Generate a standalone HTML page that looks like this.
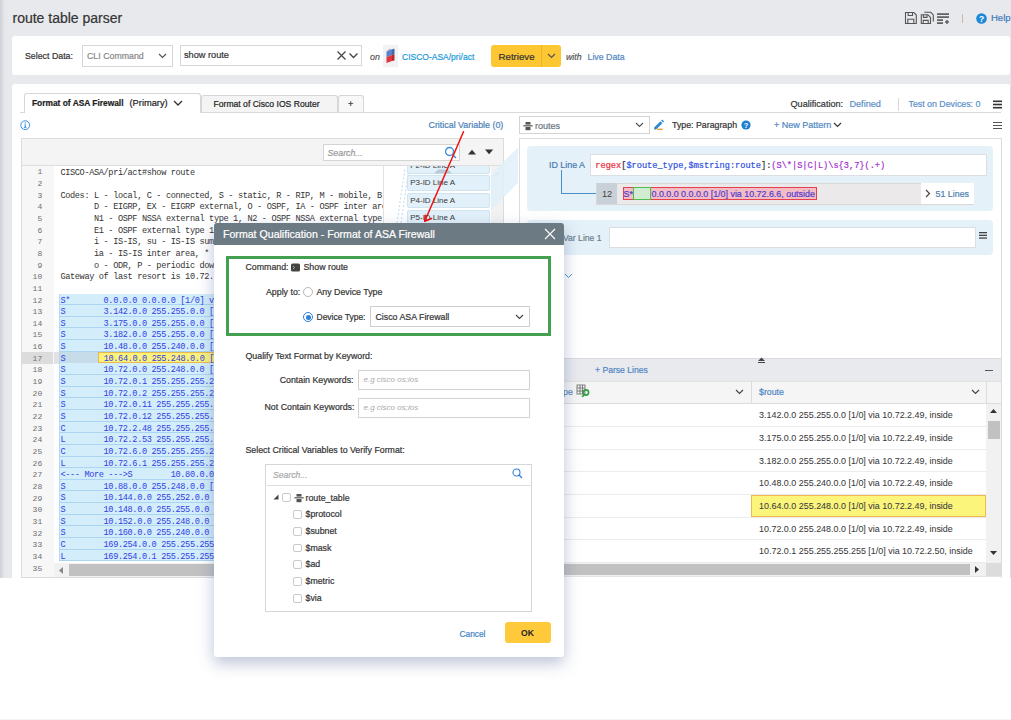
<!DOCTYPE html>
<html><head><meta charset="utf-8">
<style>
*{box-sizing:border-box;margin:0;padding:0}
html,body{width:1011px;height:720px;overflow:hidden;background:#fff;font-family:"Liberation Sans",sans-serif;color:#333}
.a{position:absolute}
.t{position:absolute;white-space:pre;line-height:14px;font-size:8.8px;-webkit-text-stroke:0.2px currentColor}
.blue{color:#3b7cbf}
#app{position:absolute;left:0;top:0;width:1011px;height:578px;background:#e8e9ec;overflow:hidden}
.card{position:absolute;background:#fff;border-radius:3px}
.box{position:absolute;border:1px solid #d6d6d6;background:#fff}
.mono{font-family:"Liberation Mono",monospace}
.cb{width:8.5px;height:8.5px;border:1px solid #cacaca;border-radius:2px;background:#fff}
.pbox{left:384.7px;width:83px;height:15.5px;background:#e1f0f9;border:1px solid #cfe3f0;border-radius:2px}
.pbox span{position:absolute;left:2.5px;top:0;line-height:14px;font-size:8px;color:#3a3a3a;white-space:pre}
#code div{height:11.65px;overflow:visible;line-height:14.6px}

#code .hl{background:#d3edfb;border-bottom:1px solid #aad4f0;border-left:1px solid #b4daf2;color:#2f3fe6;margin-left:-1px;padding-left:0}
#code .l17{position:relative}
#code .s17{position:absolute;left:0;top:0;width:38px;height:11px;background:#c6dde9;line-height:14.6px}
#code .y17{position:absolute;left:38px;top:0;width:300px;height:11.5px;background:#fcf27a;border:1px solid #e8b850;padding-left:4.3px;line-height:12.6px}
</style></head><body>
<div id="app">
  <div class="a" style="left:0;top:0;width:5px;height:578px;background:linear-gradient(to right,#cdd1d6,#e8e9ec)"></div>
  <div class="t" style="left:12.5px;top:9px;font-size:14px;line-height:18px;color:#333">route table parser</div>
  <!-- top right icons -->
  <svg class="a" style="left:904px;top:11px" width="46" height="14" viewBox="0 0 46 14">
    <g fill="none" stroke="#555" stroke-width="1.1">
      <path d="M1.5 1.5h8.3l2.5 2.5v8.5H1.5z"/><path d="M4.2 1.5v3h4.3v-3"/><path d="M3.8 12.5V8.2h6v4.3"/>
      <path d="M20.3 1.3h6.4l2.6 2.6v6.5"/><path d="M17.3 3.8h6.6l2.6 2.6v6.1H17.3z"/><path d="M19.4 3.8v2.6h3.6V3.8"/><path d="M19.2 12.5V9.4h5v3.1"/>
    </g>
    <g fill="#555"><rect x="33" y="2.3" width="12" height="1.6"/><rect x="33" y="5.3" width="12" height="1.6"/><rect x="33" y="8.3" width="6" height="1.6"/><rect x="33" y="11.3" width="6" height="1.6"/><rect x="41" y="10.3" width="4" height="1.3"/><rect x="42.35" y="9" width="1.3" height="4"/></g>
  </svg>
  <div class="a" style="left:962px;top:14px;width:1px;height:9px;background:#c9b9a8"></div>
  <svg class="a" style="left:976px;top:13px" width="11" height="11" viewBox="0 0 11 11"><circle cx="5.5" cy="5.5" r="5.3" fill="#1e88d8"/><text x="5.5" y="8.8" font-size="8.5" font-weight="bold" text-anchor="middle" fill="#fff" font-family="Liberation Sans">?</text></svg>
  <div class="t blue" style="left:991px;top:11px;font-size:9.5px">Help</div>

  <!-- card 1 -->
  <div class="card" style="left:12px;top:36px;width:998px;height:39px"></div>
  <div class="t" style="left:25px;top:49px">Select Data:</div>
  <div class="box" style="left:82px;top:45px;width:91px;height:22px"></div>
  <div class="t" style="left:87px;top:49px;color:#888">CLI Command</div>
  <svg class="a" style="left:158px;top:53px" width="9" height="6"><path d="M1 1l3.5 3.5L8 1" fill="none" stroke="#555" stroke-width="1.2"/></svg>
  <div class="box" style="left:180px;top:45px;width:182px;height:21px"></div>
  <div class="t" style="left:184px;top:48px;font-size:9.2px">show route</div>
  <svg class="a" style="left:336px;top:50px" width="24" height="11"><path d="M1.5 1.5l8 8M9.5 1.5l-8 8" stroke="#444" stroke-width="1.2"/><path d="M13.5 3.5l4 4 4-4" fill="none" stroke="#444" stroke-width="1.3"/></svg>
  <div class="t" style="left:370px;top:49.5px;font-style:italic;color:#555">on</div>
  <div class="a" style="left:383px;top:45px;width:15px;height:22px;background:#f1f2f4"></div>
  <svg class="a" style="left:385px;top:47px" width="11" height="18" viewBox="0 0 11 18"><path d="M1.5 4.5L7 2.3v5.8L1.5 10.3z" fill="#5f80c4"/><path d="M1.5 10.3L7 8.1v6L1.5 16z" fill="#e2343e"/><path d="M7 2.3L9.5 1.8v6L7 8.1z" fill="#4a66a8"/><path d="M7 8.1L9.5 7.8v5.6L7 14.1z" fill="#b8282f"/><path d="M1.5 4.5L4 2.2 9.5 1.8 7 2.3z" fill="#8aa2d4"/></svg>
  <div class="t" style="left:402px;top:50px;color:#219bd9;font-size:8.5px">CISCO-ASA/pri/act</div>
  <div class="a" style="left:491px;top:45px;width:70px;height:22px;background:#fcc733;border-radius:3px"></div>
  <div class="a" style="left:541px;top:45px;width:1px;height:22px;background:#e8b228"></div>
  <div class="t" style="left:498.5px;top:49.5px;font-size:9.7px;color:#333">Retrieve</div>
  <svg class="a" style="left:547px;top:53px" width="9" height="6"><path d="M1 1l3.5 3.5L8 1" fill="none" stroke="#555" stroke-width="1.2"/></svg>
  <div class="t" style="left:566px;top:49.8px;font-style:italic;color:#555">with</div>
  <div class="t blue" style="left:587.5px;top:49.8px;color:#4f87c2">Live Data</div>

  <!-- card 2 -->
  <div class="card" style="left:12px;top:84px;width:998px;height:500px"></div>

  <!-- tabs -->
  <div class="a" style="left:20px;top:111.5px;width:981px;height:1px;background:#d9d9d9"></div>
  <div class="a" style="left:24px;top:93px;width:176.5px;height:19.5px;background:#fff;border:1px solid #d6d6d6;border-bottom:none;border-radius:3px 3px 0 0"></div>
  <div class="t" style="left:32px;top:96px;font-weight:bold;font-size:8.4px;color:#222">Format of ASA Firewall</div>
  <div class="t" style="left:129.5px;top:96px;font-size:9.3px;color:#222">(Primary)</div>
  <svg class="a" style="left:173px;top:100px" width="10" height="7"><path d="M1 1l4 4 4-4" fill="none" stroke="#333" stroke-width="1.3"/></svg>
  <div class="a" style="left:200.5px;top:95px;width:137.5px;height:17px;background:#f4f4f4;border:1px solid #d6d6d6;border-bottom:none;border-radius:3px 3px 0 0"></div>
  <div class="t" style="left:213.5px;top:97px;font-size:8.6px;color:#222">Format of Cisco IOS Router</div>
  <div class="a" style="left:338px;top:95px;width:26px;height:17px;background:#f8f8f8;border:1px solid #d6d6d6;border-bottom:none;border-radius:3px 3px 0 0"></div>
  <div class="t" style="left:348px;top:97px;font-size:9px;color:#333">+</div>

  <div class="t" style="left:790.5px;top:97px;font-size:9.1px;color:#333">Qualification:</div>
  <div class="t" style="left:849.5px;top:97px;font-size:9.1px;color:#5b8fc9">Defined</div>
  <div class="a" style="left:897.5px;top:98px;width:1px;height:13px;background:#d8d8d8"></div>
  <div class="t" style="left:908.5px;top:97px;font-size:8.8px;color:#5b8fc9">Test on Devices: 0</div>
  <svg class="a" style="left:993px;top:100px" width="9" height="9"><g fill="#333"><rect y="0.5" width="9" height="1.6"/><rect y="3.7" width="9" height="1.6"/><rect y="6.9" width="9" height="1.6"/></g></svg>

  <!-- info + critical var -->
  <svg class="a" style="left:20px;top:120px" width="11" height="11"><circle cx="5.2" cy="5.2" r="4.4" fill="none" stroke="#3a8ee0" stroke-width="1"/><rect x="4.6" y="4.4" width="1.2" height="3.4" fill="#3a8ee0"/><rect x="3.8" y="7.3" width="2.8" height="0.8" fill="#3a8ee0"/><rect x="4.6" y="2.5" width="1.2" height="1.1" fill="#3a8ee0"/></svg>
  <div class="t" style="left:428.5px;top:118px;font-size:8.9px;color:#4a7fb8">Critical Variable (0)</div>

  <!-- editor -->
  <div class="a" style="left:21px;top:138px;width:483px;height:440px;border:1px solid #dcdcdc;background:#fff;overflow:hidden">
    <div class="a" style="left:0;top:27px;width:31.5px;height:412px;background:#f7f7f7"></div>
    <div class="a" style="left:0;top:212.9px;width:30.5px;height:11.8px;background:#dcdcdc"></div>
    <div class="a" style="left:31.5px;top:212.9px;width:7px;height:11.8px;background:#e2e2e2"></div>
    <div class="a" style="left:0;top:27px;width:360.5px;height:412px;overflow:hidden">
      <div id="nums" class="a mono" style="left:0;top:0.3px;width:20.2px;text-align:right;font-size:8px;line-height:11.65px;color:#707070"><div>1</div><div>2</div><div>3</div><div>4</div><div>5</div><div>6</div><div>7</div><div>8</div><div>9</div><div>10</div><div>11</div><div>12</div><div>13</div><div>14</div><div>15</div><div>16</div><div>17</div><div>18</div><div>19</div><div>20</div><div>21</div><div>22</div><div>23</div><div>24</div><div>25</div><div>26</div><div>27</div><div>28</div><div>29</div><div>30</div><div>31</div><div>32</div><div>33</div><div>34</div><div>35</div></div>
      <div id="code" class="a mono" style="left:38.4px;top:-0.5px;width:330px;font-size:8.6px;letter-spacing:-0.36px;line-height:11.65px;color:#333;white-space:pre"><div>CISCO-ASA/pri/act#show route</div><div>&nbsp;</div><div>Codes: L - local, C - connected, S - static, R - RIP, M - mobile, B - BGP</div><div>       D - EIGRP, EX - EIGRP external, O - OSPF, IA - OSPF inter area</div><div>       N1 - OSPF NSSA external type 1, N2 - OSPF NSSA external type 2</div><div>       E1 - OSPF external type 1, E2 - OSPF external type 2, V - VPN</div><div>       i - IS-IS, su - IS-IS summary, L1 - IS-IS level-1, L2 - IS-IS level-2</div><div>       ia - IS-IS inter area, * - candidate default, U - per-user static route</div><div>       o - ODR, P - periodic downloaded static route, + - replicated route</div><div>Gateway of last resort is 10.72.2.49 to network 0.0.0.0</div><div>&nbsp;</div><div class="hl">S*       0.0.0.0 0.0.0.0 [1/0] via 10.72.6.6, outside</div><div class="hl">S        3.142.0.0 255.255.0.0 [1/0] via 10.72.2.49, inside</div><div class="hl">S        3.175.0.0 255.255.0.0 [1/0] via 10.72.2.49, inside</div><div class="hl">S        3.182.0.0 255.255.0.0 [1/0] via 10.72.2.49, inside</div><div class="hl">S        10.48.0.0 255.240.0.0 [1/0] via 10.72.2.49, inside</div><div class="hl l17"><span class="s17">S        </span><span class="y17">10.64.0.0 255.248.0.0 [1/0] via 10.72.2.49, inside</span></div><div class="hl">S        10.72.0.0 255.248.0.0 [1/0] via 10.72.2.49, inside</div><div class="hl">S        10.72.0.1 255.255.255.255 [1/0] via 10.72.2.50, inside</div><div class="hl">S        10.72.0.2 255.255.255.255 [1/0] via 10.72.2.51, inside</div><div class="hl">S        10.72.0.11 255.255.255.255 [1/0] via 10.72.2.52, inside</div><div class="hl">S        10.72.0.12 255.255.255.255 [1/0] via 10.72.2.53, inside</div><div class="hl">C        10.72.2.48 255.255.255.248 is directly connected, inside</div><div class="hl">L        10.72.2.53 255.255.255.255 is directly connected, inside</div><div class="hl">C        10.72.6.0 255.255.255.248 is directly connected, outside</div><div class="hl">L        10.72.6.1 255.255.255.255 is directly connected, outside</div><div class="hl">&lt;--- More ---&gt;S        10.80.0.0 255.248.0.0 [1/0] via 10.72.2.49, inside</div><div class="hl">S        10.88.0.0 255.248.0.0 [1/0] via 10.72.2.49, inside</div><div class="hl">S        10.144.0.0 255.252.0.0 [1/0] via 10.72.2.49, inside</div><div class="hl">S        10.148.0.0 255.255.0.0 [1/0] via 10.72.2.49, inside</div><div class="hl">S        10.152.0.0 255.248.0.0 [1/0] via 10.72.2.49, inside</div><div class="hl">S        10.160.0.0 255.240.0.0 [1/0] via 10.72.2.49, inside</div><div class="hl">C        169.254.0.0 255.255.255.0 is directly connected, _internal_loopback</div><div class="hl">L        169.254.0.1 255.255.255.255 is directly connected, _internal_loopback</div><div>&nbsp;</div></div>
    </div>
    <div class="a" style="left:360.5px;top:27px;width:1.5px;height:412px;background:#e2e2e2"></div>

    <!-- pattern list -->
    <div class="a" style="left:469px;top:27px;width:13px;height:412px;background:#f2f2f2"></div>
    <svg class="a" style="left:471px;top:31px" width="8" height="8"><path d="M2 6l4-4" stroke="#888" stroke-width="1"/></svg>
    <svg class="a" style="left:370px;top:27px" width="20" height="200"><g stroke="#c6e2f2" stroke-width="1.2" stroke-dasharray="2 2" fill="none"><path d="M5 57L13 2"/><path d="M9 57L17 2"/></g></svg>
    <div class="a pbox" style="top:19.3px"><span>P2-ID Line A</span></div>
    <svg class="a" style="left:410px;top:30px" width="24" height="5"><path d="M2 4.5L6 0.5h10l4 4z" fill="#b9cbd8"/></svg>
    <div class="a pbox" style="top:36px"><span>P3-ID Line A</span></div>
    <div class="a pbox" style="top:53.5px"><span>P4-ID Line A</span></div>
    <div class="a pbox" style="top:71px"><span>P5-ID Line A</span></div>
    <div class="a" style="left:0;top:0;width:481px;height:26.5px;background:#f4f4f4;border-bottom:1px solid #dedede"></div>
    <div class="a" style="left:300.5px;top:4.5px;width:137.5px;height:17.5px;background:#fff;border:1px solid #d4d4d4"></div>
    <div class="t" style="left:305.5px;top:6.5px;font-style:italic;color:#999;font-size:8.8px">Search...</div>
    <svg class="a" style="left:422px;top:6.5px" width="13" height="13"><circle cx="5.5" cy="5.5" r="4" fill="none" stroke="#3a8ee0" stroke-width="1.3"/><path d="M8.5 8.5l3.5 3.5" stroke="#3a8ee0" stroke-width="1.5"/></svg>
    <svg class="a" style="left:445px;top:8.5px" width="30" height="8"><path d="M1 6.5l4 -4.8 4 4.8z" fill="#333"/><path d="M18 1.5h8.2l-4.1 4.8z" fill="#333"/></svg>
    <!-- code h scrollbar -->
    <div class="a" style="left:31.5px;top:424px;width:330px;height:13.5px;background:#f1f1f1"></div>
    <svg class="a" style="left:36px;top:427px" width="6" height="9"><path d="M5 1L1 4.5 5 8z" fill="#888"/></svg>
    <div class="a" style="left:47px;top:425px;width:314px;height:11.5px;background:#c1c1c1"></div>
  </div>



  <svg class="a" style="left:490px;top:140px" width="40" height="80"><path d="M0.8 34.4L28 7.4V42.8L0.8 70.5z" fill="#e2f0f8" opacity="0.85"/></svg>
  <!-- right panel -->
  <div class="box" style="left:519px;top:116px;width:131px;height:18px;border-color:#d4d4d4"></div>
  <svg class="a" style="left:522.5px;top:120.5px" width="10" height="10" viewBox="0 0 10 10"><g fill="#555"><rect x="2.5" y="1" width="5" height="2.6"/><rect x="0.3" y="4.2" width="9.4" height="1.2"/><rect x="2.5" y="6" width="5" height="3.2"/></g></svg>
  <div class="t" style="left:535px;top:118.5px;font-size:9px;color:#687684">routes</div>
  <svg class="a" style="left:635px;top:122px" width="9" height="6"><path d="M1 1l3.5 3.5L8 1" fill="none" stroke="#555" stroke-width="1.2"/></svg>
  <svg class="a" style="left:653px;top:119px" width="12" height="13" viewBox="0 0 12 13"><path d="M1.2 8.6l6.3-6.3 1.9 1.9-6.3 6.3H1.2z" fill="#2b8ad6"/><path d="M8.2 1.6l1-1 1.9 1.9-1 1z" fill="#2b8ad6"/><rect x="4.2" y="9.6" width="5.5" height="1.4" fill="#f0a030"/></svg>
  <div class="t" style="left:672px;top:118px;font-size:8.8px;color:#333">Type: Paragraph</div>
  <svg class="a" style="left:741px;top:120px" width="10" height="10"><circle cx="5" cy="5" r="4.6" fill="#1e7fd0"/><text x="5" y="8" font-size="7.5" font-weight="bold" text-anchor="middle" fill="#fff" font-family="Liberation Sans">?</text></svg>
  <div class="t" style="left:774px;top:118px;font-size:9px;color:#4f87c2">+ New Pattern</div>
  <svg class="a" style="left:833px;top:122px" width="9" height="6"><path d="M1 1l3.5 3.5L8 1" fill="none" stroke="#333" stroke-width="1.2"/></svg>
  <svg class="a" style="left:993px;top:121px" width="9" height="9"><g fill="#555"><rect y="1" width="9" height="1"/><rect y="4" width="9" height="1"/><rect y="7" width="9" height="1"/></g></svg>

  <div class="a" style="left:519px;top:138px;width:483px;height:440px;border:1px solid #dcdcdc;border-bottom:none;background:#fff"></div>
  <!-- ID line A -->
  <div class="a" style="left:527px;top:146px;width:466px;height:65px;background:#e4f1f9;border-radius:4px"></div>
  <div class="t" style="left:549px;top:158px;font-size:8.9px;color:#4a79b0">ID Line A</div>
  <div class="a" style="left:590px;top:153.5px;width:397px;height:22px;background:#fff;border:1px solid #d9dfe3"></div>
  <div class="t mono" style="left:595.3px;top:158.5px;font-size:8.64px;color:#333;-webkit-text-stroke:0.2px currentColor"><span style="color:#e8283a">regex</span>[<span style="color:#3052e0">$route_type,$mstring:route</span>]:<span style="color:#a42fd0">(S\*|S|C|L)\s{3,7}(.+)</span></div>
  <div class="a" style="left:561px;top:170px;width:1px;height:24px;background:#4a90c8"></div>
  <div class="a" style="left:561px;top:193px;width:35px;height:1px;background:#4a90c8"></div>
  <div class="a" style="left:596px;top:182.5px;width:378px;height:22px;background:#ebe9ea;border:1px solid #d8d8d8"></div>
  <div class="a" style="left:596.5px;top:183px;width:20.5px;height:21px;background:#c9d1d8"></div>
  <div class="t" style="left:602px;top:186.5px;font-size:9.2px;color:#444;-webkit-text-stroke:0">12</div>
  <div class="a" style="left:622.5px;top:187px;width:194.5px;height:12.5px;background:#f4bcc4;border:1px solid #e2404e"></div>
  <div class="a" style="left:633px;top:187px;width:17.5px;height:12.5px;background:#d2ecd2;border:1px solid #4cc04c"></div>
  <div class="t" style="left:623.5px;top:187px;font-size:8.9px;color:#4f3fd0">S*</div>
  <div class="t" style="left:651.5px;top:187px;font-size:8.9px;color:#4f3fd0">0.0.0.0 0.0.0.0 [1/0] via 10.72.6.6, outside</div>
  <div class="a" style="left:921px;top:183px;width:52.5px;height:21px;background:#fff"></div>
  <svg class="a" style="left:925px;top:189px" width="6" height="9"><path d="M1 1l3.5 3.5L1 8" fill="none" stroke="#444" stroke-width="1.2"/></svg>
  <div class="t" style="left:935.5px;top:187px;font-size:8.9px;color:#4f7fb0">51 Lines</div>

  <!-- var line 1 -->
  <div class="a" style="left:527px;top:219.5px;width:466px;height:35.5px;background:#e4f1f9;border-radius:4px"></div>
  <div class="t" style="left:563px;top:230.5px;font-size:8.6px;color:#6e7f8c">Var Line 1</div>
  <div class="a" style="left:608.5px;top:226.5px;width:367px;height:21px;background:#fff;border:1px solid #d9dfe3"></div>
  <svg class="a" style="left:979px;top:232px" width="8" height="7"><g fill="#444"><rect y="0" width="8" height="1.3"/><rect y="2.7" width="8" height="1.3"/><rect y="5.4" width="8" height="1.3"/></g></svg>
  <svg class="a" style="left:564px;top:273px" width="9" height="6"><path d="M1 1l3.5 3.5L8 1" fill="none" stroke="#4a90c8" stroke-width="1"/></svg>

  <!-- parse lines bar -->
  <div class="a" style="left:520px;top:358px;width:481px;height:22.5px;background:#e9eaee;border-top:1px solid #dadbe0"></div>
  <div class="t" style="left:595px;top:363px;font-size:8.6px;color:#4f87c2">+ Parse Lines</div>
  <svg class="a" style="left:757px;top:357px" width="9" height="7"><path d="M1 4l3.5-3.5L8 4z" fill="#444"/><rect x="1" y="5" width="7" height="1" fill="#444"/></svg>
  <div class="a" style="left:985px;top:369.5px;width:7.5px;height:1.3px;background:#555"></div>
  <div class="a" style="left:520px;top:380.5px;width:481px;height:23px;background:#f5f5f5;border-top:1px solid #e0e0e0;border-bottom:1px solid #dcdcdc"></div>
  <div class="a" style="left:751px;top:381px;width:1px;height:22.5px;background:#dcdcdc"></div>
  <div class="a" style="left:985.5px;top:381px;width:1px;height:22.5px;background:#dcdcdc"></div>
  <div class="t" style="left:563px;top:385px;font-size:8.8px;color:#5a86b8">pe</div>
  <svg class="a" style="left:575.5px;top:384px" width="14" height="14" viewBox="0 0 14 14"><g fill="none" stroke="#666" stroke-width="0.8"><rect x="1" y="1" width="8" height="9"/><path d="M1 4h8M1 7h8M4 1v9M6.5 1v9"/></g><circle cx="10" cy="8.5" r="2.6" fill="none" stroke="#2aa040" stroke-width="1.6"/><path d="M8.2 10.5l-2 2.5" stroke="#2aa040" stroke-width="1.6"/></svg>
  <svg class="a" style="left:735px;top:389px" width="9" height="6"><path d="M1 1l3.5 3.5L8 1" fill="none" stroke="#444" stroke-width="1.2"/></svg>
  <div class="t" style="left:759px;top:385px;font-size:8.8px;color:#4f87c2">$route</div>
  <svg class="a" style="left:971px;top:389px" width="9" height="6"><path d="M1 1l3.5 3.5L8 1" fill="none" stroke="#444" stroke-width="1.2"/></svg>
  <div class="a" style="left:520px;top:425.8px;width:466px;height:1px;background:#ececec"></div>
  <div class="t" style="left:759px;top:408.1px;font-size:8.95px;color:#3a3a3a;-webkit-text-stroke:0.05px #3a3a3a">3.142.0.0 255.255.0.0 [1/0] via 10.72.2.49, inside</div>
  <div class="a" style="left:520px;top:448.5px;width:466px;height:1px;background:#ececec"></div>
  <div class="t" style="left:759px;top:430.8px;font-size:8.95px;color:#3a3a3a;-webkit-text-stroke:0.05px #3a3a3a">3.175.0.0 255.255.0.0 [1/0] via 10.72.2.49, inside</div>
  <div class="a" style="left:520px;top:471.2px;width:466px;height:1px;background:#ececec"></div>
  <div class="t" style="left:759px;top:453.5px;font-size:8.95px;color:#3a3a3a;-webkit-text-stroke:0.05px #3a3a3a">3.182.0.0 255.255.0.0 [1/0] via 10.72.2.49, inside</div>
  <div class="a" style="left:520px;top:493.9px;width:466px;height:1px;background:#ececec"></div>
  <div class="t" style="left:759px;top:476.2px;font-size:8.95px;color:#3a3a3a;-webkit-text-stroke:0.05px #3a3a3a">10.48.0.0 255.240.0.0 [1/0] via 10.72.2.49, inside</div>
  <div class="a" style="left:751.3px;top:495.0px;width:234.5px;height:21.5px;background:#fbf57c;border:1px solid #f0b850"></div>
  <div class="a" style="left:520px;top:516.6px;width:466px;height:1px;background:#ececec"></div>
  <div class="t" style="left:759px;top:498.9px;font-size:8.95px;color:#3a3a3a;-webkit-text-stroke:0.05px #3a3a3a">10.64.0.0 255.248.0.0 [1/0] via 10.72.2.49, inside</div>
  <div class="a" style="left:520px;top:539.3px;width:466px;height:1px;background:#ececec"></div>
  <div class="t" style="left:759px;top:521.6px;font-size:8.95px;color:#3a3a3a;-webkit-text-stroke:0.05px #3a3a3a">10.72.0.0 255.248.0.0 [1/0] via 10.72.2.49, inside</div>
  <div class="a" style="left:520px;top:562.0px;width:466px;height:1px;background:#ececec"></div>
  <div class="t" style="left:759px;top:544.3px;font-size:8.95px;color:#3a3a3a;-webkit-text-stroke:0.05px #3a3a3a">10.72.0.1 255.255.255.255 [1/0] via 10.72.2.50, inside</div>

  <div class="a" style="left:986px;top:403.6px;width:15px;height:159px;background:#f1f1f1"></div>
  <svg class="a" style="left:989px;top:408px" width="9" height="6"><path d="M1 5l3.5-4 3.5 4z" fill="#333"/></svg>
  <div class="a" style="left:988px;top:421px;width:11.5px;height:17.5px;background:#c1c1c1"></div>
  <svg class="a" style="left:989px;top:550px" width="9" height="6"><path d="M1 1h7l-3.5 4z" fill="#333"/></svg>
  <div class="a" style="left:520px;top:562.5px;width:466px;height:13.5px;background:#f1f1f1"></div>
  <div class="a" style="left:520px;top:564px;width:450px;height:10.5px;background:#c1c1c1"></div>
  <svg class="a" style="left:974px;top:565px" width="6" height="9"><path d="M1 1l4 3.5L1 8z" fill="#333"/></svg>
  <div class="a" style="left:986px;top:562.5px;width:15px;height:13.5px;background:#dcdcdc"></div>
  <div class="a" style="left:519px;top:576px;width:483px;height:1px;background:#e4e4e4"></div>

  <svg class="a" style="left:0;top:0" width="1011" height="720"><g stroke="#f01010" stroke-width="1.5" fill="none" stroke-linecap="round"><path d="M463.5 131.8L424.7 221.2"/><path d="M424.7 221.2L425.2 215.3M424.7 221.2L431.6 218.5"/></g></svg>
  <!-- card2 right border -->
  <div class="a" style="left:1009.5px;top:86px;width:1px;height:492px;background:#e0e0e0"></div>
</div>

<!-- dialog -->
<div class="a" style="left:214px;top:223px;width:350px;height:434px;background:#fff;border-radius:3px;box-shadow:0 6px 16px rgba(60,80,140,0.35)"></div>
<div class="a" style="left:214px;top:223px;width:350px;height:21.5px;background:#6c7a83;border-radius:3px 3px 0 0"></div>
<div class="t" style="left:223px;top:226.5px;font-size:10.6px;line-height:14px;color:#fff">Format Qualification - Format of ASA Firewall</div>
<svg class="a" style="left:544px;top:228px" width="12" height="12"><path d="M1 1l10 10M11 1L1 11" stroke="#fff" stroke-width="1.1"/></svg>
<div class="a" style="left:226px;top:256px;width:325px;height:79.5px;border:3px solid #43a050"></div>
<div class="t" style="left:245.5px;top:260px">Command:</div>
<svg class="a" style="left:291px;top:262.5px" width="9" height="9"><rect x="0" y="0.5" width="9" height="8" rx="1.5" fill="#444"/><path d="M2 3l1.5 1.5L2 6" stroke="#ccc" stroke-width="0.8" fill="none"/></svg>
<div class="t" style="left:303.5px;top:260px">Show route</div>
<div class="t" style="left:266px;top:284.5px">Apply to:</div>
<div class="a" style="left:303px;top:286.5px;width:10px;height:10px;border:1px solid #b8b8b8;border-radius:50%"></div>
<div class="t" style="left:316.5px;top:284.5px">Any Device Type</div>
<div class="a" style="left:303px;top:312px;width:10px;height:10px;border:1px solid #2f7fd6;border-radius:50%;background:#fff"></div>
<div class="a" style="left:305.5px;top:314.5px;width:5px;height:5px;background:#2f7fd6;border-radius:50%"></div>
<div class="t" style="left:316.5px;top:310px;font-size:8.5px">Device Type:</div>
<div class="a" style="left:370px;top:306px;width:160px;height:20.5px;border:1px solid #cfcfcf;background:#fff"></div>
<div class="t" style="left:375.5px;top:309.5px;font-size:8.8px">Cisco ASA Firewall</div>
<svg class="a" style="left:515px;top:314px" width="9" height="6"><path d="M1 1l3.5 3.5L8 1" fill="none" stroke="#444" stroke-width="1.2"/></svg>
<div class="t" style="left:245.5px;top:349px">Qualify Text Format by Keyword:</div>
<div class="t" style="left:279.5px;top:373px;width:74px;text-align:right">Contain Keywords:</div>
<div class="a" style="left:358px;top:369.5px;width:172px;height:20.5px;border:1px solid #d2d2d2"></div>
<div class="t" style="left:363.5px;top:373px;font-style:italic;color:#aaa;font-size:8px;-webkit-text-stroke:0">e.g cisco os;ios</div>
<div class="t" style="left:264.5px;top:400px">Not Contain Keywords:</div>
<div class="a" style="left:358px;top:397.5px;width:172px;height:20.5px;border:1px solid #d2d2d2"></div>
<div class="t" style="left:363.5px;top:401px;font-style:italic;color:#aaa;font-size:8px;-webkit-text-stroke:0">e.g cisco os;ios</div>
<div class="t" style="left:245.5px;top:443px">Select Critical Variables to Verify Format:</div>
<div class="a" style="left:265px;top:464px;width:266.5px;height:147.5px;border:1px solid #d6d6d6"></div>
<div class="a" style="left:266.5px;top:484.5px;width:264px;height:1px;background:#dedede"></div>
<div class="t" style="left:273px;top:468px;font-style:italic;color:#aaa;font-size:8.6px">Search...</div>
<svg class="a" style="left:512px;top:468px" width="11" height="11"><circle cx="4.5" cy="4.5" r="3.5" fill="none" stroke="#2f7fd6" stroke-width="1.1"/><path d="M7 7l3 3" stroke="#2f7fd6" stroke-width="1.3"/></svg>
<svg class="a" style="left:273px;top:494px" width="6" height="6"><path d="M5.5 0.5v5h-5z" fill="#444"/></svg>
<div class="a cb" style="left:282px;top:493px"></div>
<svg class="a" style="left:293.5px;top:492.5px" width="10" height="10" viewBox="0 0 10 10"><g fill="#555"><rect x="2.5" y="1" width="5" height="2.6"/><rect x="0.3" y="4.2" width="9.4" height="1.2"/><rect x="2.5" y="6" width="5" height="3.2"/></g></svg>
<div class="t" style="left:305.5px;top:490.5px">route_table</div>
<div class="a cb" style="left:293px;top:510.0px"></div>
<div class="t" style="left:305.5px;top:507.0px">$protocol</div>
<div class="a cb" style="left:293px;top:527.0px"></div>
<div class="t" style="left:305.5px;top:524.0px">$subnet</div>
<div class="a cb" style="left:293px;top:543.5px"></div>
<div class="t" style="left:305.5px;top:540.5px">$mask</div>
<div class="a cb" style="left:293px;top:560.4px"></div>
<div class="t" style="left:305.5px;top:557.4px">$ad</div>
<div class="a cb" style="left:293px;top:577.0px"></div>
<div class="t" style="left:305.5px;top:574.0px">$metric</div>
<div class="a cb" style="left:293px;top:594.0px"></div>
<div class="t" style="left:305.5px;top:591.0px">$via</div>
<div class="t" style="left:459.5px;top:626.5px;font-size:8.35px;color:#3f84c6">Cancel</div>
<div class="a" style="left:504.5px;top:622px;width:46px;height:21px;background:#ffc93c;border-radius:3px"></div>
<div class="t" style="left:504.5px;top:625.5px;width:46px;text-align:center;font-weight:bold;font-size:8.6px;color:#222;-webkit-text-stroke:0">OK</div>
<div class="a" style="left:0;top:719px;width:1011px;height:1px;background:#f3f3f3"></div>
</body></html>
